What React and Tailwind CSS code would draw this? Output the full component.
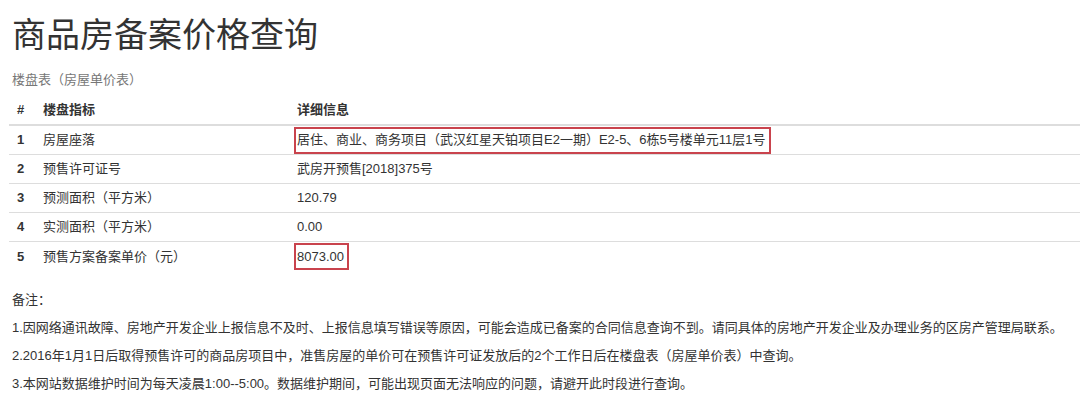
import React from "react";

const rows = [
  { n: "1", k: "房屋座落", v: "居住、商业、商务项目（武汉红星天铂项目E2一期）E2-5、6栋5号楼单元11层1号", box: true },
  { n: "2", k: "预售许可证号", v: "武房开预售[2018]375号" },
  { n: "3", k: "预测面积（平方米）", v: "120.79" },
  { n: "4", k: "实测面积（平方米）", v: "0.00" },
  { n: "5", k: "预售方案备案单价（元）", v: "8073.00", box: true },
];

export default function App() {
  return (
    <div
      className="w-[1080px] h-[404px] overflow-hidden bg-white text-[#333] pl-[12px]"
      style={{ fontFamily: '"Liberation Sans", "Noto Sans CJK SC", sans-serif' }}
    >
      <h1 className="pt-[15px] text-[34px] leading-[40px] font-normal text-[#333]">商品房备案价格查询</h1>
      <div className="mt-[15px] text-[13px] leading-[20px] text-[#777]">楼盘表（房屋单价表）</div>
      <div className="mt-[6px] -ml-[3px] text-[13px]">
        <div className="grid grid-cols-[26px_254px_1fr] h-[30px] border-b-2 border-[#ddd] items-center font-bold">
          <div className="pl-[8px]">#</div>
          <div className="pl-[8px]">楼盘指标</div>
          <div className="pl-[8px]">详细信息</div>
        </div>
        {rows.map((r, i) => (
          <div
            key={r.n}
            className={
              "grid grid-cols-[26px_254px_1fr] h-[29px] items-center " +
              (i < rows.length - 1 ? "border-b border-[#ddd]" : "")
            }
          >
            <div className="pl-[8px] font-bold">{r.n}</div>
            <div className="pl-[8px]">{r.k}</div>
            <div className="pl-[8px] flex items-center">
              {r.box ? (
                <span className="-ml-[3px] inline-flex items-center h-[27px] border-2 border-[#c9434d] pl-[1px] pr-[3px]">
                  {r.v}
                </span>
              ) : (
                <span>{r.v}</span>
              )}
            </div>
          </div>
        ))}
      </div>
      <div className="mt-[15px] text-[13px] leading-[28px] text-[#333]">
        <p>备注：</p>
        <p>1.因网络通讯故障、房地产开发企业上报信息不及时、上报信息填写错误等原因，可能会造成已备案的合同信息查询不到。请同具体的房地产开发企业及办理业务的区房产管理局联系。</p>
        <p>2.2016年1月1日后取得预售许可的商品房项目中，准售房屋的单价可在预售许可证发放后的2个工作日后在楼盘表（房屋单价表）中查询。</p>
        <p>3.本网站数据维护时间为每天凌晨1:00--5:00。数据维护期间，可能出现页面无法响应的问题，请避开此时段进行查询。</p>
      </div>
    </div>
  );
}
